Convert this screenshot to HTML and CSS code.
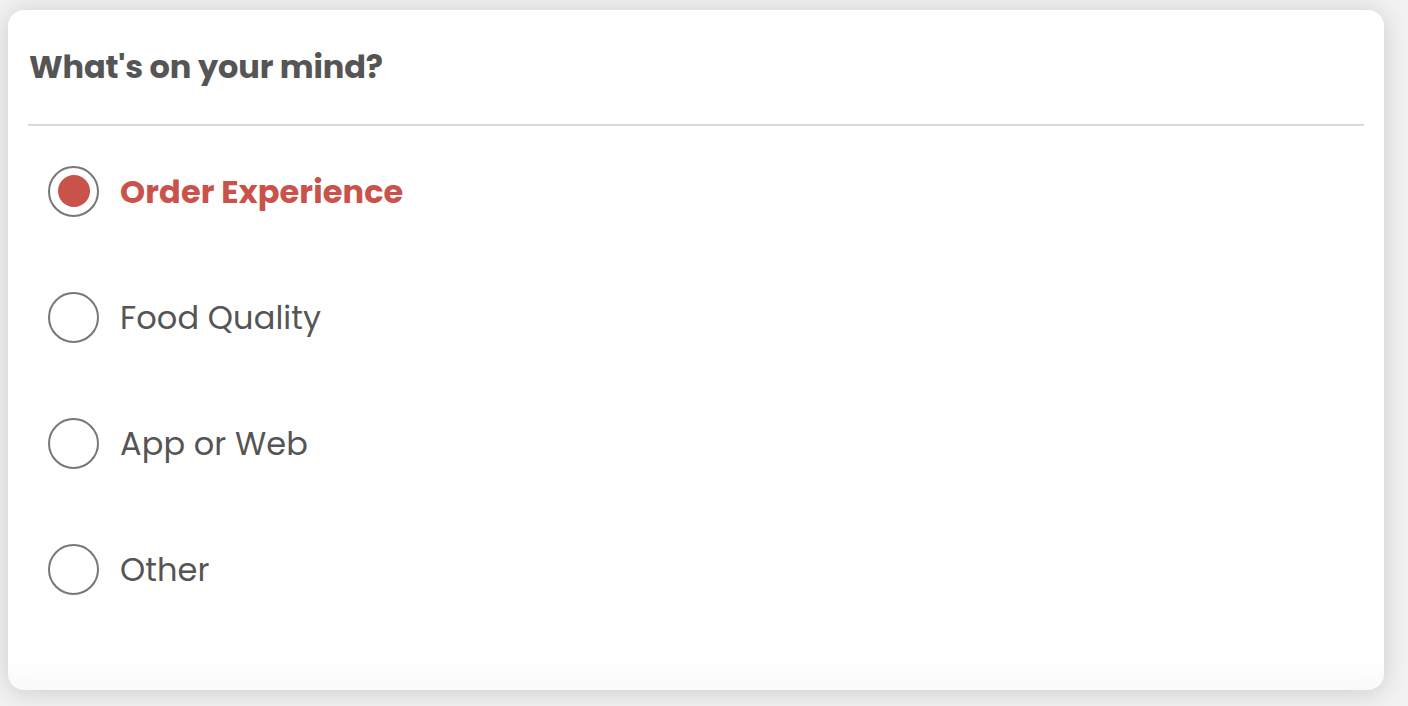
FILE: index.html
```html
<!DOCTYPE html>
<html lang="en">
<head>
<meta charset="utf-8">
<title>What's on your mind?</title>
<link rel="stylesheet" href="styles.css">
</head>
<body>
<div class="card">
  <div class="card-header">
    <h2 class="title">What's on your mind?</h2>
  </div>
  <ul class="options">
    <li class="option selected"><span class="radio"><span class="dot"></span></span><span class="label">Order Experience</span></li>
    <li class="option"><span class="radio"></span><span class="label">Food Quality</span></li>
    <li class="option"><span class="radio"></span><span class="label">App or Web</span></li>
    <li class="option"><span class="radio"></span><span class="label">Other</span></li>
  </ul>
</div>
</body>
</html>
```
FILE: styles.css
```css
html, body {
  margin: 0;
  padding: 0;
}
body {
  background: #f2f2f2;
  font-family: "Poppins", "Open Sans", "DejaVu Sans", sans-serif;
  color: #555555;
  padding: 10px 24px 16px 8px;
}
.card {
  box-sizing: border-box;
  width: 1376px;
  height: 680px;
  background: #ffffff;
  border-radius: 16px;
  padding: 0 20px;
  box-shadow: 0 2px 26px rgba(0, 0, 0, 0.16), inset 0 -40px 30px -30px rgba(0, 0, 0, 0.03);
}
.card-header {
  padding: 37px 0 37px;
  border-bottom: 2px solid #d9d9d9;
}
.title {
  margin: 0;
  font-size: 32px;
  line-height: 40px;
  font-weight: 700;
  color: #555555;
  padding-left: 1px;
  letter-spacing: -0.15px;
}
.options {
  list-style: none;
  margin: 0;
  padding: 2px 0 0 20px;
}
.option {
  height: 126px;
  display: flex;
  align-items: center;
  gap: 21px;
}
.radio {
  box-sizing: border-box;
  width: 51px;
  height: 51px;
  border: 2px solid #777777;
  border-radius: 50%;
  display: flex;
  align-items: center;
  justify-content: center;
  flex: none;
}
.dot {
  width: 32px;
  height: 32px;
  border-radius: 50%;
  background: #c9524a;
}
.label {
  font-size: 32px;
  line-height: 40px;
  color: #555555;
  padding-top: 2px;
  letter-spacing: 0.1px;
}
.option.selected .label {
  color: #c9524a;
  font-weight: 700;
}
```
